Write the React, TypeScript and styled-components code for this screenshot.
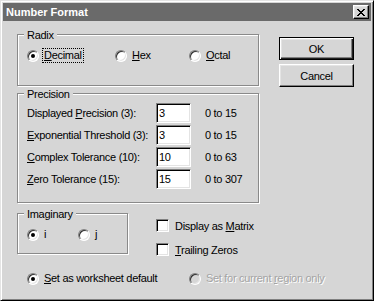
import React from "react";
import styled, { createGlobalStyle, css } from "styled-components";

const BG = "#d6d6d6";

const Global = createGlobalStyle`
  html, body { margin: 0; padding: 0; background: ${BG}; }
  body { font-family: "Liberation Sans", Arial, sans-serif; font-size: 11px; letter-spacing: -0.3px; color: #000; }
  * { box-sizing: border-box; }
`;

const raised = css`
  border: 1px solid;
  border-color: #fff #000 #000 #fff;
  box-shadow: inset -1px -1px 0 #808080, inset 1px 1px 0 #e4e4e4;
`;

const sunken = css`
  border: 1px solid;
  border-color: #808080 #fff #fff #808080;
  box-shadow: inset 1px 1px 0 #000, inset -1px -1px 0 #e4e4e4;
`;

const Window = styled.div`
  width: 374px;
  height: 301px;
  background: ${BG};
  border: 1px solid;
  border-color: #e4e4e4 #000 #000 #e4e4e4;
  box-shadow: inset 1px 1px 0 #fff, inset -1px -1px 0 #808080;
  padding: 2px;
  display: flex;
  flex-direction: column;
`;

const TitleBar = styled.div`
  height: 18px;
  background: #6a6a6a;
  display: flex;
  align-items: center;
  justify-content: space-between;
  padding: 0 2px 0 3px;
`;

const Title = styled.span`
  color: #fff;
  font-weight: bold;
  font-size: 11px;
  letter-spacing: 0;
`;

const CloseButton = styled.div`
  width: 16px;
  height: 14px;
  background: ${BG};
  ${raised};
  display: flex;
  align-items: center;
  justify-content: center;
`;

const Body = styled.div`
  display: flex;
  flex-direction: column;
  padding-left: 14px;
`;

const Top = styled.div`
  display: flex;
`;

const LeftCol = styled.div`
  width: 242px;
  display: flex;
  flex-direction: column;
`;

const Group = styled.div<{ $h: number; $mt: number; $w?: number }>`
  position: relative;
  height: ${(p) => p.$h}px;
  width: ${(p) => (p.$w ? `${p.$w}px` : "auto")};
  margin-top: ${(p) => p.$mt}px;
  border: 1px solid #8a8a8a;
  box-shadow: inset 1px 1px 0 #fff, 1px 1px 0 #fff;
`;

const Legend = styled.span`
  position: absolute;
  top: -6px;
  left: 6px;
  padding: 0 3px;
  background: ${BG};
  line-height: 13px;
`;

const RadioRow = styled.div<{ $pt: number; $pl: number }>`
  display: flex;
  align-items: center;
  padding-top: ${(p) => p.$pt}px;
  padding-left: ${(p) => p.$pl}px;
`;

const RadioItem = styled.div<{ $w?: number }>`
  display: flex;
  align-items: center;
  width: ${(p) => (p.$w ? `${p.$w}px` : "auto")};
`;

const RadioCircle = styled.span<{ $checked?: boolean; $disabled?: boolean }>`
  position: relative;
  flex: none;
  width: 12px;
  height: 12px;
  border-radius: 50%;
  background: ${(p) => (p.$disabled ? BG : "#fff")};
  border: 1px solid;
  border-color: #808080 #fff #fff #808080;
  box-shadow: inset 1px 1px 0 #303030, inset -1px -1px 0 #e4e4e4;
  &::after {
    content: "";
    display: ${(p) => (p.$checked ? "block" : "none")};
    position: absolute;
    left: 3px;
    top: 3px;
    width: 4px;
    height: 4px;
    border-radius: 50%;
    background: #000;
  }
`;

const ChoiceLabel = styled.span<{ $focus?: boolean; $disabled?: boolean }>`
  margin-left: 3px;
  padding: 0 1px;
  line-height: 13px;
  border: 1px dotted ${(p) => (p.$focus ? "#000" : "transparent")};
  color: ${(p) => (p.$disabled ? "#a4a4a4" : "#000")};
  text-shadow: ${(p) => (p.$disabled ? "1px 1px 0 #fff" : "none")};
  white-space: nowrap;
`;

const U = styled.span`
  text-decoration: underline;
  text-underline-offset: 1px;
`;

const PrecisionRows = styled.div`
  display: flex;
  flex-direction: column;
  gap: 2px;
  padding: 9px 0 0 9px;
`;

const Row = styled.div`
  display: grid;
  grid-template-columns: 129px 35px auto;
  align-items: center;
  height: 20px;
`;

const Field = styled.div`
  width: 35px;
  height: 20px;
  background: #fff;
  ${sunken};
  padding: 0 0 0 2px;
  line-height: 17px;
  display: flex;
  align-items: center;
`;

const Range = styled.span`
  margin-left: 14px;
`;

const ButtonCol = styled.div`
  display: flex;
  flex-direction: column;
  gap: 4px;
  margin-left: 20px;
  padding-top: 16px;
`;

const Button = styled.div<{ $default?: boolean }>`
  width: 75px;
  height: 23px;
  display: flex;
  align-items: center;
  justify-content: center;
  background: ${BG};
  ${(p) =>
    p.$default
      ? css`
          border: 1px solid #000;
          box-shadow: inset 1px 1px 0 #fff, inset -1px -1px 0 #202020,
            inset -2px -2px 0 #808080, inset 2px 2px 0 #e4e4e4;
        `
      : raised};
`;

const MiddleRow = styled.div`
  display: flex;
  margin-top: 10px;
`;

const CheckCol = styled.div`
  display: flex;
  flex-direction: column;
  gap: 11px;
  margin-left: 28px;
  padding-top: 6px;
`;

const CheckItem = styled.div`
  display: flex;
  align-items: center;
  gap: 6px;
`;

const CheckBox = styled.span`
  width: 13px;
  height: 13px;
  flex: none;
  background: #fff;
  ${sunken};
`;

const BottomRow = styled(RadioRow)``;

const Radio: React.FC<{
  checked?: boolean;
  disabled?: boolean;
  focus?: boolean;
  width?: number;
  children: React.ReactNode;
}> = ({ checked, disabled, focus, width, children }) => (
  <RadioItem $w={width}>
    <RadioCircle $checked={checked} $disabled={disabled} />
    <ChoiceLabel $focus={focus} $disabled={disabled}>
      {children}
    </ChoiceLabel>
  </RadioItem>
);

const rows: { pre: string; u: string; post: string; value: string; range: string }[] = [
  { pre: "Displayed ", u: "P", post: "recision (3):", value: "3", range: "0 to 15" },
  { pre: "", u: "E", post: "xponential Threshold (3):", value: "3", range: "0 to 15" },
  { pre: "", u: "C", post: "omplex Tolerance (10):", value: "10", range: "0 to 63" },
  { pre: "", u: "Z", post: "ero Tolerance (15):", value: "15", range: "0 to 307" },
];

export default function App() {
  return (
    <>
      <Global />
      <Window>
        <TitleBar>
          <Title>Number Format</Title>
          <CloseButton>
            <svg width="8" height="7" viewBox="0 0 8 7">
              <path
                d="M0 0h2v1h1v1h2V1h1V0h2v1H7v1H6v1H5v1h1v1h1v1h1v1H6V6H5V5H3v1H2v1H0V6h1V5h1V4h1V3H2V2H1V1H0z"
                fill="#000"
              />
            </svg>
          </CloseButton>
        </TitleBar>
        <Body>
          <Top>
            <LeftCol>
              <Group $h={52} $mt={13}>
                <Legend>Radix</Legend>
                <RadioRow $pt={13} $pl={9}>
                  <Radio checked focus width={88}>
                    <U>D</U>ecimal
                  </Radio>
                  <Radio width={74}>
                    <U>H</U>ex
                  </Radio>
                  <Radio>
                    <U>O</U>ctal
                  </Radio>
                </RadioRow>
              </Group>
              <Group $h={110} $mt={7}>
                <Legend>Precision</Legend>
                <PrecisionRows>
                  {rows.map((r) => (
                    <Row key={r.post}>
                      <span>
                        {r.pre}
                        <U>{r.u}</U>
                        {r.post}
                      </span>
                      <Field>{r.value}</Field>
                      <Range>{r.range}</Range>
                    </Row>
                  ))}
                </PrecisionRows>
              </Group>
            </LeftCol>
            <ButtonCol>
              <Button $default>OK</Button>
              <Button>Cancel</Button>
            </ButtonCol>
          </Top>
          <MiddleRow>
            <Group $h={41} $mt={0} $w={111}>
              <Legend>Imaginary</Legend>
              <RadioRow $pt={13} $pl={9}>
                <Radio checked width={51}>
                  i
                </Radio>
                <Radio>j</Radio>
              </RadioRow>
            </Group>
            <CheckCol>
              <CheckItem>
                <CheckBox />
                <span>
                  Display as <U>M</U>atrix
                </span>
              </CheckItem>
              <CheckItem>
                <CheckBox />
                <span>
                  <U>T</U>railing Zeros
                </span>
              </CheckItem>
            </CheckCol>
          </MiddleRow>
          <BottomRow $pt={15} $pl={10}>
            <Radio checked width={162}>
              <U>S</U>et as worksheet default
            </Radio>
            <Radio disabled>
              Set for current <U>r</U>egion only
            </Radio>
          </BottomRow>
        </Body>
      </Window>
    </>
  );
}
